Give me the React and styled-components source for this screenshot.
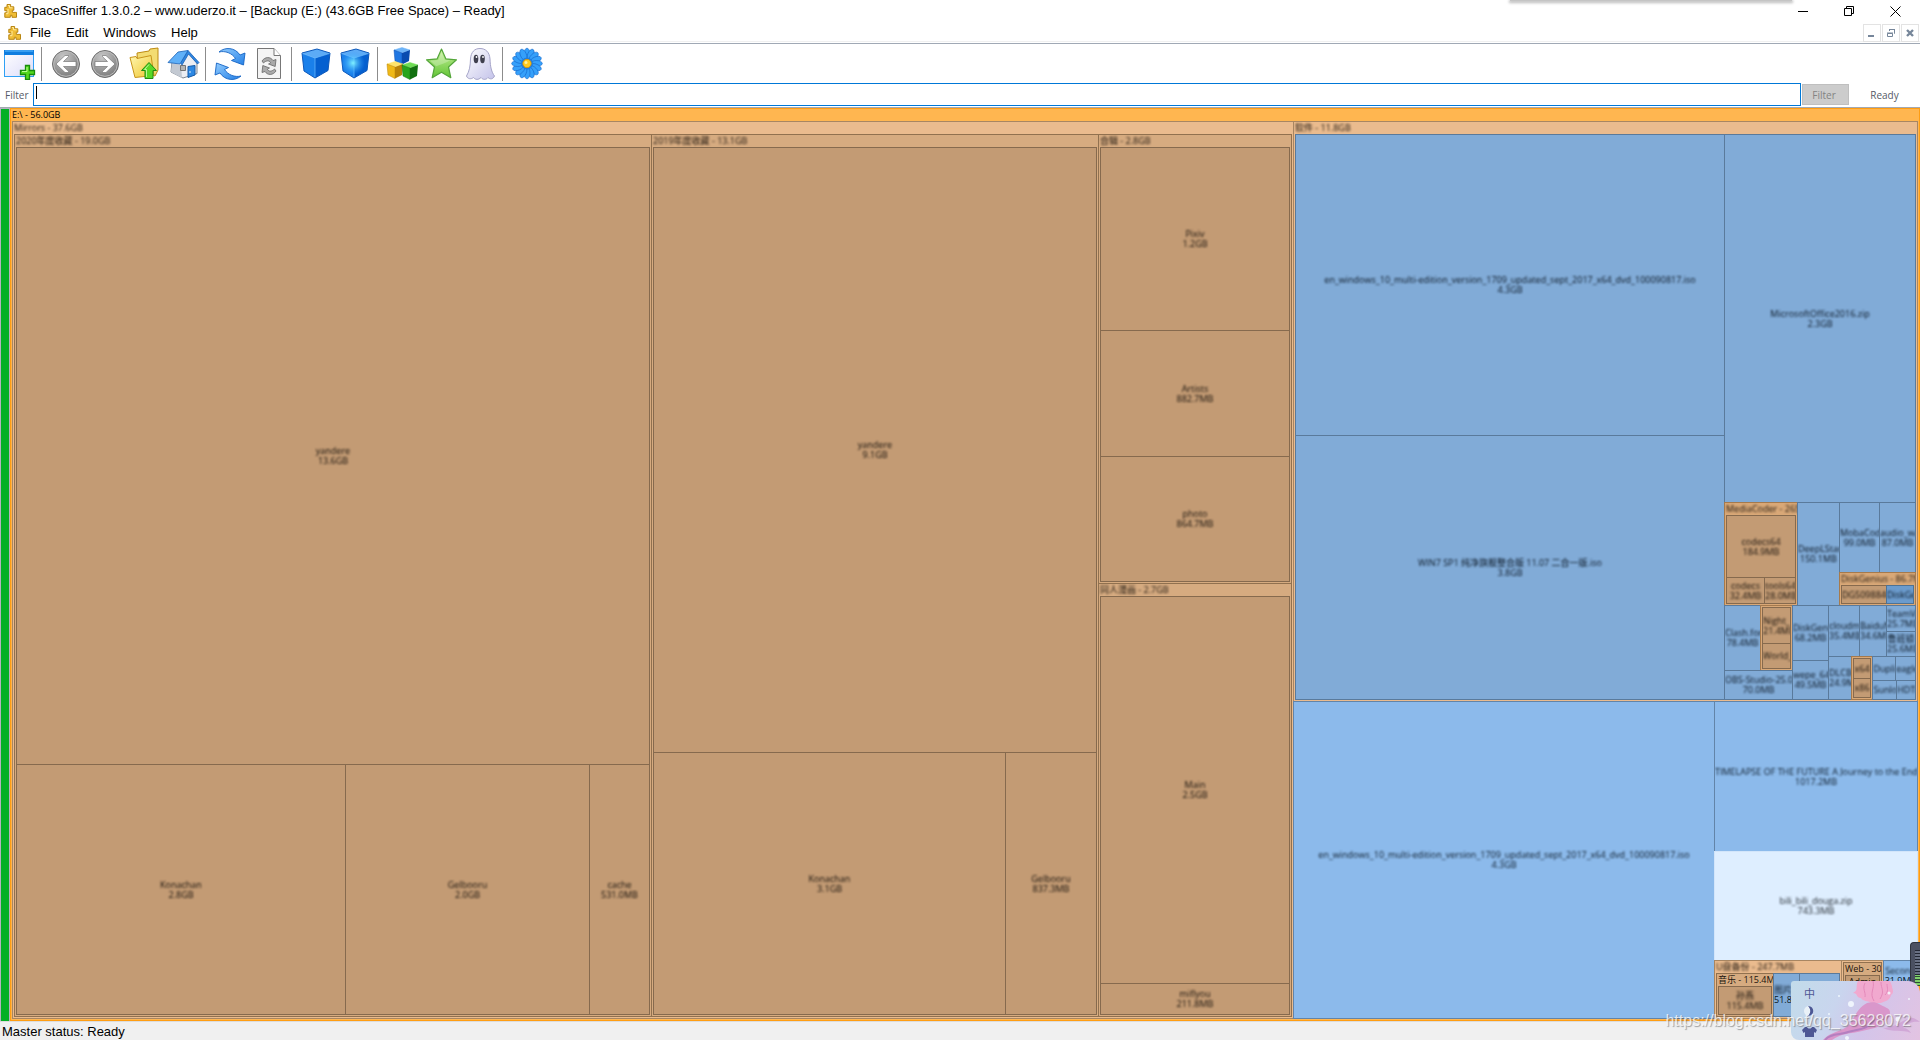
import React from 'react';
import styled, { createGlobalStyle } from 'styled-components';

const GlobalStyle = createGlobalStyle`
  * {
    box-sizing: border-box;
  }

  body {
    margin: 0;
    background: #fff;
    color: #000;
    font-family: 'Liberation Sans', 'Noto Sans CJK SC', sans-serif;
    font-size: 13px;
  }

  button,
  input {
    font: inherit;
    color: inherit;
    margin: 0;
    padding: 0;
  }
`;

/* ---------- window chrome ---------- */

const Window = styled.div`
  position: relative;
  display: flex;
  flex-direction: column;
  height: 100vh;
  min-height: 600px;
  overflow: hidden;
`;

const TitleBar = styled.header`
  display: flex;
  align-items: center;
  height: 24px;
  padding: 0 2px 2px 3px;
`;

const Title = styled.h1`
  flex: 1;
  margin: 0 0 0 5px;
  font-size: 13px;
  font-weight: 400;
  line-height: 20px;
  white-space: nowrap;
`;

const WindowButton = styled.button`
  display: flex;
  align-items: center;
  justify-content: center;
  width: 46px;
  height: 20px;
  border: 0;
  background: none;
`;

const MenuBar = styled.nav`
  display: flex;
  align-items: center;
  height: 20px;
  padding: 0 1px 1px 7px;
  border-bottom: 1px solid #a0a9b5;
  box-shadow: inset 0 -1px 0 #fff, inset 0 -2px 0 #f0f0f0;
`;

const MenuItems = styled.div`
  display: flex;
  flex: 1;
  gap: 15px;
  margin-left: 8px;
`;

const MenuItem = styled.button`
  border: 0;
  background: none;
  line-height: 18px;
`;

const ChildButtons = styled.div`
  display: flex;
  gap: 1px;
`;

const ChildButton = styled.button`
  display: flex;
  align-items: center;
  justify-content: center;
  width: 18px;
  height: 18px;
  border: 1px solid #e3e3e3;
  background: #fff;
`;

const TopShadow = styled.div`
  position: absolute;
  top: 0;
  right: 128px;
  width: 282px;
  height: 1px;
  background: #c4c4c4;
  box-shadow: 0 1px 3px 1px #bbb;
`;

const ToolBar = styled.div`
  display: flex;
  align-items: center;
  height: 39px;
`;

const ToolButton = styled.button`
  display: flex;
  align-items: center;
  justify-content: center;
  width: 39px;
  height: 39px;
  padding-right: 1px;
  border: 0;
  background: none;
`;

const ToolSeparator = styled.span`
  width: 1px;
  height: 34px;
  margin: 0 5px 0 2px;
  background: #8c8c8c;
`;

const FilterBar = styled.form`
  display: flex;
  align-items: center;
  height: 25px;
  padding: 0 0 1px 5px;
  border-bottom: 1px solid #a3a8b0;
  font-family: 'Open Sans', sans-serif;
  font-size: 10px;
  color: #555a66;
`;

const FilterLabel = styled.label`
  width: 28px;
`;

const FilterField = styled.div`
  position: relative;
  flex: 1;
`;

const FilterInput = styled.input`
  display: block;
  width: 100%;
  height: 23px;
  padding: 0 3px;
  border: 1px solid #0078d7;
  background: #fff;
  outline: none;
`;

const Caret = styled.span`
  position: absolute;
  top: 3px;
  left: 3px;
  width: 1px;
  height: 13px;
  background: #000;
`;

const FilterButton = styled.button`
  width: 47px;
  height: 21px;
  margin-left: 1px;
  padding-right: 3px;
  border: 1px solid #bfbfbf;
  background: #ccc;
  color: #838383;
`;

const FilterState = styled.span`
  width: 71px;
  text-align: center;
`;

const StatusBar = styled.footer`
  height: 19px;
  padding-left: 2px;
  border-top: 1px solid #dcdcdc;
  background: #f0f0f0;
  line-height: 19px;
`;

/* ---------- tree map ---------- */

const MapArea = styled.main`
  display: flex;
  flex: 1;
  min-height: 0;
`;

const FreeSpaceBar = styled.div`
  width: 10px;
  border: 1px solid #b4b4c0;
  border-bottom: 0;
  background: #04b026;
`;

const palette = {
  root: ['#ffb650', '#ff9d12', '#000'],
  folder1: ['#eabb8e', '#a88662', '#1c150e'],
  folder2: ['#d6ab80', '#91714f', '#1c150e'],
  folder3: ['#c39b74', '#866a4e', '#140f0a'],
  folderLight: ['#d9a877', '#a57a4d', '#1c150e'],
  file1: ['#8cbaeb', '#6284a8', '#0c1a28'],
  file2: ['#81abd7', '#5a7a9b', '#0a1623'],
  file3: ['#6b9bcd', '#4f7293', '#0a1623'],
  selected: ['#deeeff', '#d2e5fa', '#20262c'],
};

/* the cell takes the share of the space, the box inside draws the border */
const Cell = styled.div`
  display: flex;
  flex: ${props => props.$size} 1 0;
  min-width: 0;
  min-height: 0;
`;

const Box = styled.div`
  display: flex;
  flex-direction: column;
  flex: 1;
  min-width: 0;
  min-height: 0;
  overflow: hidden;
  border: 1px solid ${props => palette[props.$kind][1]};
  background: ${props => palette[props.$kind][0]};
  color: ${props => palette[props.$kind][2]};
  font-family: 'Open Sans', 'Noto Sans CJK SC', sans-serif;
  font-size: 9px;
`;

const FolderBox = styled(Box)`
  padding: ${props => (props.$bare ? '1px' : '0 1px 1px')};
`;

const TileBox = styled(Box)`
  justify-content: center;
  align-items: safe center;
`;

const FolderHeader = styled.h2`
  flex: none;
  height: 12px;
  margin: 0;
  font-size: 9px;
  font-weight: 400;
  line-height: 12px;
  white-space: nowrap;
  filter: ${props => (props.$blur ? `blur(${props.$blur}px)` : 'none')};
`;

const TileText = styled.span`
  flex: none;
  line-height: 10px;
  white-space: nowrap;
  filter: ${props => (props.$blur ? `blur(${props.$blur}px)` : 'none')};
`;

/* neighbours share one border line, hence the overlap */
const SplitBox = styled.div`
  display: flex;
  flex: ${props => props.$size} 1 0;
  flex-direction: ${props => props.$dir};
  min-width: 0;
  min-height: 0;

  > * + * {
    ${props => (props.$dir === 'row' ? 'margin-left: -1px;' : 'margin-top: -1px;')}
  }
`;

const Row = ({ size = 1, children }) => (
  <SplitBox $dir="row" $size={size}>
    {children}
  </SplitBox>
);

const Column = ({ size = 1, children }) => (
  <SplitBox $dir="column" $size={size}>
    {children}
  </SplitBox>
);

const Folder = ({ size = 1, kind, name, blur = 1, children }) => (
  <Cell $size={size}>
    <FolderBox as="section" $kind={kind} $bare={!name}>
      {name && <FolderHeader $blur={blur}>{name}</FolderHeader>}
      {children}
    </FolderBox>
  </Cell>
);

const Tile = ({ size = 1, kind = 'folder3', name, bytes, blur = 1, clear }) => (
  <Cell $size={size}>
    <TileBox $kind={kind}>
      {name && <TileText $blur={blur}>{name}</TileText>}
      {bytes && <TileText $blur={clear ? 0 : blur}>{bytes}</TileText>}
    </TileBox>
  </Cell>
);

const Mirrors = () => (
  <Folder size={1282} kind="folder1" name="Mirrors - 37.6GB">
    <Row>
      <Folder size={638} kind="folder2" name="2020年度收藏 - 19.0GB">
        <Column>
          <Tile size={618} name="yandere" bytes="13.6GB" />
          <Row size={251}>
            <Tile size={330} name="Konachan" bytes="2.8GB" />
            <Tile size={245} name="Gelbooru" bytes="2.0GB" />
            <Tile size={61} name="cache" bytes="531.0MB" />
          </Row>
        </Column>
      </Folder>
      <Folder size={448} kind="folder2" name="2019年度收藏 - 13.1GB">
        <Column>
          <Tile size={606} name="yandere" bytes="9.1GB" />
          <Row size={263}>
            <Tile size={353} name="Konachan" bytes="3.1GB" />
            <Tile size={92} name="Gelbooru" bytes="837.3MB" />
          </Row>
        </Column>
      </Folder>
      <Column size={194}>
        <Folder size={450} kind="folder2" name="合辑 - 2.8GB">
          <Column>
            <Tile size={184} name="Pixiv" bytes="1.2GB" />
            <Tile size={127} name="Artists" bytes="882.7MB" />
            <Tile size={126} name="photo" bytes="864.7MB" />
          </Column>
        </Folder>
        <Folder size={434} kind="folder2" name="同人漫画 - 2.7GB">
          <Column>
            <Tile size={388} name="Main" bytes="2.5GB" />
            <Tile size={32} name="miflyou" bytes="211.8MB" />
          </Column>
        </Folder>
      </Column>
    </Row>
  </Folder>
);

const Tools = () => (
  <Column size={198}>
    <Row size={104}>
      <Folder size={74} kind="folderLight" name="MediaCoder - 265.7MB">
        <Column>
          <Tile size={63} name="codecs64" bytes="184.9MB" />
          <Row size={27}>
            <Tile size={39} name="codecs" bytes="32.4MB" />
            <Tile size={32} name="tools64" bytes="28.0MB" />
          </Row>
        </Column>
      </Folder>
      <Tile size={43} kind="file2" name="DeepLStart" bytes="150.1MB" />
      <Column size={77}>
        <Row size={71}>
          <Tile size={41} kind="file2" name="MobaCoder" bytes="99.0MB" />
          <Tile size={37} kind="file2" name="audio_wave" bytes="87.0MB" />
        </Row>
        <Folder size={34} kind="folderLight" name="DiskGenius - 86.7MB">
          <Row>
            <Tile size={46} name="DG5098846" />
            <Tile size={28} kind="file3" name="DiskGenius" />
          </Row>
        </Folder>
      </Column>
    </Row>
    <Row size={95}>
      <Column size={69}>
        <Row size={66}>
          <Tile size={37} kind="file2" name="Clash.for" bytes="78.4MB" />
          <Folder size={33} kind="folderLight">
            <Column>
              <Tile size={38} name="Night_" bytes="21.4MB" />
              <Tile size={26} name="World_" />
            </Column>
          </Folder>
        </Row>
        <Tile size={30} kind="file2" name="OBS-Studio-25.0" bytes="70.0MB" />
      </Column>
      <Column size={37}>
        <Tile size={56} kind="file2" name="DiskGeni" bytes="68.2MB" />
        <Tile size={40} kind="file2" name="wepe_64" bytes="49.5MB" />
      </Column>
      <Column size={88}>
        <Row size={52}>
          <Tile size={32} kind="file2" name="cloudmu" bytes="35.4MB" />
          <Tile size={28} kind="file2" name="BaiduN" bytes="34.6MB" />
          <Column size={30}>
            <Tile size={27} kind="file2" name="TeamVi" bytes="25.7MB" />
            <Tile size={26} kind="file2" name="鲁班锁" bytes="25.6MB" />
          </Column>
        </Row>
        <Row size={44}>
          <Tile size={24} kind="file2" name="DLCBo" bytes="24.9M" />
          <Folder size={23} kind="folderLight">
            <Column>
              <Tile size={22} name="x64" />
              <Tile size={20} name="x86" />
            </Column>
          </Folder>
          <Column size={44}>
            <Row size={25}>
              <Tile size={24} kind="file2" name="Dupli" />
              <Tile size={21} kind="file2" name="eagle" />
            </Row>
            <Row size={20}>
              <Tile size={25} kind="file2" name="Sunlo" />
              <Tile size={20} kind="file2" name="HDTu" />
            </Row>
          </Column>
        </Row>
      </Column>
    </Row>
  </Column>
);

const Software = () => (
  <Folder size={581} kind="folder1" name="软件 - 11.8GB">
    <Row>
      <Column size={430}>
        <Tile
          size={302}
          kind="file2"
          name="en_windows_10_multi-edition_version_1709_updated_sept_2017_x64_dvd_100090817.iso"
          bytes="4.3GB"
        />
        <Tile size={265} kind="file2" name="WIN7 SP1 纯净旗舰整合版 11.07 二合一版.iso" bytes="3.8GB" />
      </Column>
      <Column size={192}>
        <Tile size={369} kind="file2" name="MicrosoftOffice2016.zip" bytes="2.3GB" />
        <Tools />
      </Column>
    </Row>
  </Folder>
);

const Downloads = () => (
  <Row size={318}>
    <Tile
      size={422}
      kind="file1"
      name="en_windows_10_multi-edition_version_1709_updated_sept_2017_x64_dvd_100090817.iso"
      bytes="4.3GB"
    />
    <Column size={204}>
      <Tile
        size={151}
        kind="file1"
        name="TIMELAPSE OF THE FUTURE A Journey to the End of Time.mp4"
        bytes="1017.2MB"
      />
      <Tile size={110} kind="selected" name="bili_bili_douga.zip" bytes="743.3MB" />
      <Row size={59}>
        <Folder size={128} kind="folder1" name="U盘备份 - 247.7MB">
          <Row>
            <Folder size={58} kind="folder2" name="音乐 - 115.4MB" blur={0}>
              <Tile name="孙燕" bytes="115.4MB" />
            </Folder>
            <Tile size={27} kind="file2" name="图片集" bytes="51.8MB" clear />
            <Tile size={41} kind="file2" />
          </Row>
        </Folder>
        <Folder size={43} kind="folder1">
          <Folder kind="folder2" name="Web - 30.1MB" blur={0}>
            <Column>
              <Tile size={14} name="Admin" blur={0} />
              <Tile size={26} />
            </Column>
          </Folder>
        </Folder>
        <Column size={35}>
          <Tile size={32} kind="file1" name="Second" bytes="31.9MB" clear />
          <Tile size={28} kind="file1" />
        </Column>
      </Row>
    </Column>
  </Row>
);

/* ---------- icons ---------- */

const Puzzle = () => (
  <svg width="15" height="16" viewBox="0 0 15 16" aria-hidden="true">
    <path
      d="M4 4.300V1.500h3.600v2.300h3.200v3.400H9.300v2.200h4.200v4.900H9v-2H7.300v2H1.800V9.800H4V7.700H1.800V4.300z"
      fill="#efbd36"
      stroke="#b98612"
      strokeLinejoin="round"
    />
    <path d="M5 2.500h1.500v2.300h3M3 10.700h2V6" stroke="#ffeb9d" fill="none" />
  </svg>
);

const NewView = () => (
  <svg width="33" height="33" viewBox="0 0 33 33">
    <defs>
      <linearGradient id="newPane" x1="0" y1="0" x2="1" y2="1">
        <stop offset="0" stopColor="#fff" />
        <stop offset="1" stopColor="#dcdcfa" />
      </linearGradient>
    </defs>
    <rect x="1.500" y="4.500" width="29" height="25" fill="url(#newPane)" stroke="#2fa0f5" />
    <path d="M1 3h30v5H1z" fill="#107ee0" />
    <path d="M2 4h28" stroke="#63bdff" />
    <path d="M22.500 18.500h4v5h5v4h-5v5h-4v-5h-5v-4h5z" fill="#54d91e" stroke="#178c0c" strokeWidth="1.300" />
    <path d="M24 20v4.500h-5" stroke="#b8ff91" fill="none" />
  </svg>
);

const Arrow = ({ flip }) => (
  <svg width="30" height="32" viewBox="0 0 30 32">
    <defs>
      <radialGradient id="arrowDisc" cx=".4" cy=".25" r=".8">
        <stop offset="0" stopColor="#c8c8c8" />
        <stop offset="1" stopColor="#777" />
      </radialGradient>
    </defs>
    <circle cx="15" cy="16" r="13.500" fill="url(#arrowDisc)" stroke="#6d6d6d" />
    <circle cx="15" cy="16" r="12.300" fill="none" stroke="#bcbcbc" />
    <path
      transform={flip ? 'matrix(-1 0 0 1 30 0)' : undefined}
      d="M5 16 14 7.500h3.500v1.200L12.500 13.500H25v5H12.500l5 4.800v1.200H14z"
      fill="#fff"
      stroke="#777"
      strokeWidth=".7"
    />
  </svg>
);

const FolderUp = () => (
  <svg width="33" height="33" viewBox="0 0 33 33">
    <defs>
      <linearGradient id="folderFace" x1="0" y1="0" x2="1" y2="1">
        <stop offset="0" stopColor="#fff7b0" />
        <stop offset="1" stopColor="#eec42d" />
      </linearGradient>
    </defs>
    <path d="M9 6l12-2 1-2 8-1v22l-3 6-17-5z" fill="#f3dc72" stroke="#bd8a12" />
    <path d="M2 10.500l6-1 1 2 14-3 3 20-19 2z" fill="url(#folderFace)" stroke="#c8951b" />
    <path d="M21 15.500l7.500 8H25v8h-8v-8h-3.500z" fill="#58d826" stroke="#1f8c13" />
    <path d="M21 17.500l-4.500 5H18.500v7.500" stroke="#bdf79b" fill="none" />
  </svg>
);

const Home = () => (
  <svg width="33" height="33" viewBox="0 0 33 33">
    <path d="M5 15 22 6l8 10v10.500L16 31 4 25z" fill="#eceef3" stroke="#7f8792" />
    <path d="M5 16l9 2 1 13-11-6z" fill="#c3c9d2" />
    <path d="M21 3.500 32 15.500l-1.500 1.500L21.500 7 15 18l-1.500-2.500z" fill="#2f86e0" stroke="#1a62b8" strokeWidth=".8" />
    <path d="M11 5l10-1.500L13 17 1 15.500z" fill="#5fb0f8" stroke="#1a62b8" strokeWidth=".8" />
    <path d="M21 19.500l7-1V28l-7 2.500z" fill="#2c88e4" stroke="#145aa8" />
    <path d="M13.500 18.500h5v5h-5z" fill="#b3b3b3" stroke="#747474" />
    <circle cx="23" cy="25" r=".8" fill="#fff" />
  </svg>
);

const Refresh = () => (
  <svg width="34" height="34" viewBox="0 0 34 34">
    <defs>
      <linearGradient id="refreshFill" x1="0" y1="0" x2="1" y2="1">
        <stop offset="0" stopColor="#93cdff" />
        <stop offset="1" stopColor="#2480e6" />
      </linearGradient>
    </defs>
    <g fill="url(#refreshFill)" stroke="#1463c4" strokeWidth=".9">
      <path d="M6 5C12-.3 22 .3 27 8l5-2-1.500 12-12-4.500 4-2C19 6 12 3.500 6 5z" />
      <path d="M28 29C22 34.300 12 33.700 7 26l-5 2 1.500-12 12 4.500-4 2C15 28 22 30.500 28 29z" />
    </g>
  </svg>
);

const RefreshPage = () => (
  <svg width="26" height="33" viewBox="0 0 26 33">
    <path d="M1.500 1.500H18l6.500 7v23h-23z" fill="#f4f4f4" stroke="#777" />
    <path d="M18 1.500v7h6.500" fill="#fff" stroke="#777" />
    <g fill="#aaa" stroke="#666" strokeWidth=".8">
      <path d="M6 14c3-4.500 8.500-4.500 11-.5l3-1-.8 7-6.700-2.500 2.200-1.300C13 13 10 13.500 7.500 16z" />
      <path d="M20 24c-3 4.500-8.500 4.500-11 .5l-3 1 .8-7 6.700 2.500-2.200 1.300C13 25 16 24.500 18.500 22z" />
    </g>
  </svg>
);

const Cube = ({ lit }) => (
  <svg width="32" height="33" viewBox="0 0 32 33">
    <defs>
      <radialGradient id="cubeGlow" cx=".5" cy=".5" r=".5">
        <stop offset="0" stopColor="#7ff0ff" />
        <stop offset="1" stopColor="#2b9bff" stopOpacity="0" />
      </radialGradient>
    </defs>
    <path d="M2 6 17 2l13 4L15 11z" fill="#5cabf6" />
    <path d="M2 6 15 11v20L4 24z" fill="#1a80ea" />
    <path d="M15 11 30 6 28 23.500 15 31z" fill="#0560d0" />
    <path d="M2 6 17 2l13 4L28 23.500 15 31 4 24z" fill="none" stroke="#0c58bb" strokeLinejoin="round" />
    <path d="M2.500 6.500 15 11l14.500-4.500M15 11v19" fill="none" stroke="#62b4fb" strokeWidth=".8" />
    {lit && <circle cx="14" cy="16" r="12" fill="url(#cubeGlow)" />}
  </svg>
);

const smallCubes = [
  { x: 7, y: 0, colors: ['#6eb4f8', '#1f76e2', '#0a4cb0'] },
  { x: 0, y: 14, colors: ['#ffe46c', '#efb918', '#b98308'] },
  { x: 15, y: 15, colors: ['#6fdc55', '#28a51d', '#127010'] },
];

const Blocks = () => (
  <svg width="33" height="34" viewBox="0 0 33 34">
    {smallCubes.map(({ x, y, colors }) => (
      <g key={x} transform={`translate(${x} ${y})`} strokeLinejoin="round">
        <path d="M1 3 9 .5 17 3 9 6z" fill={colors[0]} stroke={colors[0]} strokeWidth=".5" />
        <path d="M1 3l8 3v11.500L2 14z" fill={colors[1]} stroke={colors[2]} strokeWidth=".5" />
        <path d="M9 6l8-3-1 11-7 3.500z" fill={colors[2]} />
      </g>
    ))}
  </svg>
);

const Star = () => (
  <svg width="33" height="33" viewBox="0 0 33 33">
    <defs>
      <linearGradient id="starFill" x1="0" y1="0" x2="0" y2="1">
        <stop offset="0" stopColor="#c7f09a" />
        <stop offset="1" stopColor="#62c535" />
      </linearGradient>
    </defs>
    <path
      d="M16.500 2l4.300 9.800 10.700 1-8 7.200 2.300 10.700-9.300-5.500-9.300 5.500L9.500 20l-8-7.200 10.700-1z"
      fill="url(#starFill)"
      stroke="#54a63a"
      strokeWidth="1.200"
      strokeLinejoin="round"
    />
    <path d="M16.500 5l-3.200 8-8 .8 6 5.500c4-2 9-3 14-6l-5.500-.5z" fill="#fff" opacity=".25" />
  </svg>
);

const Ghost = () => (
  <svg width="31" height="34" viewBox="0 0 31 34">
    <defs>
      <linearGradient id="ghostFill" x1="0" y1="0" x2="1" y2="1">
        <stop offset="0" stopColor="#fff" />
        <stop offset="1" stopColor="#c4c3ea" />
      </linearGradient>
    </defs>
    <path
      d="M5.500 12C6 5 9.500 1.500 15 1.500S24.500 5 25 12c.3 8 1.500 13 4.500 17-1.500 3.500-4.500 3.500-6.500 1.500-2 2.500-5 2.500-7 0-2.500 2.500-5.500 2.500-7.500 0-2.500 2-6 1.500-7-1.500 3-5 3.800-10 4-17z"
      fill="url(#ghostFill)"
      stroke="#a5a4c8"
    />
    <ellipse cx="11" cy="12" rx="2.300" ry="4.200" fill="#3f3f4e" />
    <ellipse cx="17.500" cy="12" rx="2.300" ry="4.200" fill="#3f3f4e" />
    <circle cx="11.500" cy="10" r=".9" fill="#fff" />
    <circle cx="18" cy="10" r=".9" fill="#fff" />
  </svg>
);

const petals = Array.from({ length: 16 }, (_, i) => i * 22.5);

const Flower = () => (
  <svg width="32" height="33" viewBox="-16 -16.500 32 33">
    {petals.map(angle => (
      <ellipse
        key={angle}
        cy="-9.500"
        rx="3"
        ry="5.800"
        transform={`rotate(${angle})`}
        fill="#35a0fa"
        stroke="#1468cc"
        strokeWidth=".6"
      />
    ))}
    <circle r="6" fill="#1d7de2" />
    <circle r="4.200" fill="#ffcb1f" stroke="#d08f08" strokeWidth=".8" />
    <circle cx="-1" cy="-1" r="1.500" fill="#fff09a" />
  </svg>
);

/* ---------- overlays ---------- */

const ImePanel = styled.aside`
  position: absolute;
  right: 0;
  bottom: 0;
  width: 129px;
  height: 59px;
  border-radius: 3px 12px 0 8px;
  overflow: hidden;
  background: linear-gradient(115deg, #c2dcea 0%, #c9d5ee 35%, #d3c5ea 60%, #e3c3e2 100%);
  color: #4d5794;

  svg {
    display: block;
  }
`;

const ImeMode = styled.span`
  position: absolute;
  top: 4px;
  left: 13px;
  font-family: 'Noto Sans CJK SC', sans-serif;
  font-size: 11px;
  line-height: 16px;
`;

const Gadget = styled.div`
  position: absolute;
  right: 0;
  bottom: 54px;
  width: 10px;
  height: 44px;
  padding: 7px 0 0 4px;
  border: 1px solid #2e333f;
  border-right: 0;
  border-radius: 4px 0 0 0;
  background: #4a5062;
`;

const Meter = styled.div`
  height: 36px;
  background: repeating-linear-gradient(#222734 0 1px, #687084 1px 3px);

  &::after {
    content: '';
    display: block;
    height: 36px;
    background: repeating-linear-gradient(#7fd06a 0 2px, #2f4a35 2px 3px);
    clip-path: inset(25px 0 0 0);
  }
`;

const Watermark = styled.div`
  position: absolute;
  right: 9px;
  bottom: 8px;
  font-family: 'Liberation Sans', sans-serif;
  font-size: 16px;
  line-height: 22px;
  color: rgba(255, 255, 255, 0.75);
  text-shadow: 1px 1px 1px rgba(90, 90, 90, 0.55);
`;

const Mermaid = () => (
  <svg width="129" height="59" viewBox="0 0 129 59" aria-hidden="true">
    <path
      d="M67 0c-3 6 1 9-5 12 5 0 3 5 8 5 2 4 7 2 10 5h10c5-2 9-3 10-8 4-3 1-6 1-9l-2-5z"
      fill="#f1a9cf"
    />
    <path d="M74 2c-3 6 1 9 0 14M82 0c2 8-4 12 1 20M90 1c0 7 4 9-1 17M96 3c0 4 2 7-2 11" stroke="#e389ba" fill="none" />
    <path
      d="M76 22c4-1 9-1 12 1 5 3 11 4 11 8 0 5-2 7-5 10-6 6-14 7-23 9-12 3-20 2-30 9h-9c8-9 19-8 26-15 5-6 8-17 18-22z"
      fill="#d997cb"
    />
    <path d="M34 59c5-7 16-5 23-8 9-3 20-2 26-12" stroke="#b47fc0" fill="none" strokeWidth="2" />
    <path d="M92 47c11 0 18-7 27-10 3-1 6 1 10 4-9-1-12 2-17 6 4 0 6 2 8 5-9-4-18 0-28-5z" fill="#cc9cd2" opacity=".7" />
    <g fill="#f5fbff" opacity=".85">
      <circle cx="60" cy="23" r="3" />
      <circle cx="107" cy="38" r="2.500" />
      <circle cx="56" cy="57" r="2" />
      <circle cx="98" cy="12" r="1.500" />
      <circle cx="48" cy="15" r="1" />
      <circle cx="118" cy="18" r="1" />
      <circle cx="38" cy="33" r="1" />
    </g>
    <path d="M18 25a5 5 0 0 0-5 5 5 5 0 0 0 5 5c2-3 2-7 0-10z" fill="#e9f1f8" />
    <path d="M17 25c7 0 7 10 0 10 3-3 3-7 0-10z" fill="#4d5794" />
    <path d="M14 46l-3 3 1.500 3 1.500-1v5h9v-5l1.500 1 1.500-3-3-3h-2c-1 2-4 2-5 0z" fill="#4d5794" />
  </svg>
);

const toolGroups = [
  [['New view', <NewView />]],
  [
    ['Back', <Arrow />],
    ['Forward', <Arrow flip />],
    ['Parent folder', <FolderUp />],
    ['Home', <Home />],
  ],
  [
    ['Rescan', <Refresh />],
    ['Rescan selected', <RefreshPage />],
  ],
  [
    ['Less detail', <Cube />],
    ['More detail', <Cube lit />],
  ],
  [
    ['File classes', <Blocks />],
    ['Free space', <Star />],
    ['Unknown space', <Ghost />],
  ],
  [['Configure', <Flower />]],
];

const App = () => (
  <Window>
    <GlobalStyle />
    <TitleBar>
      <Puzzle />
      <Title>SpaceSniffer 1.3.0.2 – www.uderzo.it – [Backup (E:) (43.6GB Free Space) – Ready]</Title>
      <WindowButton aria-label="Minimize">
        <svg width="11" height="11" viewBox="0 0 11 11" stroke="#000">
          <path d="M0 5.500h10" />
        </svg>
      </WindowButton>
      <WindowButton aria-label="Restore">
        <svg width="11" height="11" viewBox="0 0 11 11" stroke="#000" fill="none">
          <path d="M.5 2.500h7v7h-7zM2.500 2.500v-2h7v7h-2" />
        </svg>
      </WindowButton>
      <WindowButton aria-label="Close">
        <svg width="11" height="11" viewBox="0 0 11 11" stroke="#000">
          <path d="M.5.5l10 10M10.500.5l-10 10" />
        </svg>
      </WindowButton>
    </TitleBar>
    <MenuBar>
      <Puzzle />
      <MenuItems>
        {['File', 'Edit', 'Windows', 'Help'].map(item => (
          <MenuItem key={item}>{item}</MenuItem>
        ))}
      </MenuItems>
      <ChildButtons>
        <ChildButton aria-label="Minimize view">
          <svg width="10" height="10" viewBox="0 0 10 10">
            <path d="M1 7h6v2H1z" fill="#76869a" />
          </svg>
        </ChildButton>
        <ChildButton aria-label="Restore view">
          <svg width="10" height="10" viewBox="0 0 10 10" fill="none" stroke="#76869a">
            <path d="M1.500 5.500h5v3h-5zM1 5h6M3.500 3V1.500h5v4H8M3 1.500h6" />
          </svg>
        </ChildButton>
        <ChildButton aria-label="Close view">
          <svg width="10" height="10" viewBox="0 0 10 10" stroke="#76869a" strokeWidth="2.400">
            <path d="M2 2l6 6M8 2l-6 6" />
          </svg>
        </ChildButton>
      </ChildButtons>
    </MenuBar>
    <ToolBar>
      {toolGroups.map((group, i) => (
        <React.Fragment key={group[0][0]}>
          {i > 0 && <ToolSeparator />}
          {group.map(([label, icon]) => (
            <ToolButton key={label} aria-label={label}>
              {icon}
            </ToolButton>
          ))}
        </React.Fragment>
      ))}
    </ToolBar>
    <FilterBar onSubmit={e => e.preventDefault()}>
      <FilterLabel htmlFor="filter">Filter</FilterLabel>
      <FilterField>
        <FilterInput id="filter" type="text" />
        <Caret />
      </FilterField>
      <FilterButton type="submit" disabled>
        Filter
      </FilterButton>
      <FilterState>Ready</FilterState>
    </FilterBar>
    <MapArea>
      <FreeSpaceBar />
      <Folder kind="root" name="E:\ - 56.0GB" blur={0}>
        <Row>
          <Mirrors />
          <Column size={625}>
            <Software />
            <Downloads />
          </Column>
        </Row>
      </Folder>
    </MapArea>
    <StatusBar>Master status: Ready</StatusBar>
    <TopShadow />
    <Gadget>
      <Meter />
    </Gadget>
    <ImePanel>
      <Mermaid />
      <ImeMode>中</ImeMode>
    </ImePanel>
    <Watermark>https://blog.csdn.net/qq_35628072</Watermark>
  </Window>
);

export default App;
